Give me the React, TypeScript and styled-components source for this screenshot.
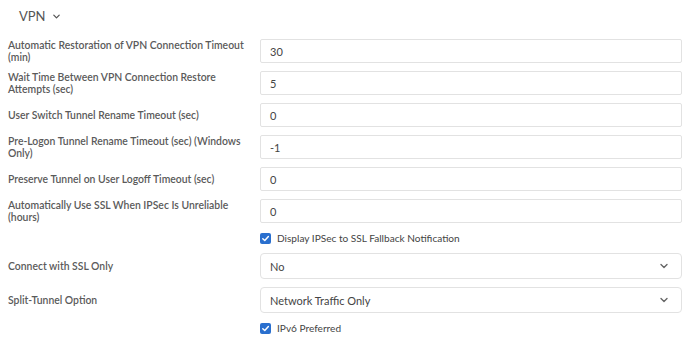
import React from "react";
import styled, { createGlobalStyle } from "styled-components";

const Global = createGlobalStyle`
  html, body { margin: 0; padding: 0; background: #fff; }
  body { font-family: Lato, "Open Sans", "Liberation Sans", sans-serif; }
`;

const Page = styled.div`
  width: 700px;
  height: 338px;
  box-sizing: border-box;
  padding: 8px 18px 0 8px;
  background: #fff;
  overflow: hidden;
`;

const Header = styled.div`
  display: flex;
  align-items: center;
  gap: 6px;
  height: 16px;
  padding-left: 11px;
  font-size: 13px;
  color: #555;
  margin-bottom: 15px;
`;

const Form = styled.div`
  display: flex;
  flex-direction: column;
  gap: 8px;
`;

const Row = styled.div`
  display: grid;
  grid-template-columns: 252px 1fr;
  align-items: center;
`;

const Label = styled.div`
  font-family: "Lato Semibold", Lato, "Open Sans", sans-serif;
  font-size: 10.4px;
  line-height: 12px;
  font-weight: 600;
  color: #5a5a5a;
  padding-right: 4px;
`;

const Input = styled.div`
  height: 24px;
  box-sizing: border-box;
  border: 1px solid #e2e2e2;
  border-radius: 2px;
  padding: 0 9px;
  display: flex;
  align-items: center;
  font-size: 11px;
  color: #444;
`;

const Select = styled(Input)`
  height: 26px;
  border-radius: 4px;
  justify-content: space-between;
  padding-right: 12px;
`;

const CheckRow = styled.label`
  display: flex;
  align-items: center;
  gap: 6px;
  height: 14px;
  font-size: 10.1px;
  color: #444;
`;

const Box = styled.span`
  width: 11px;
  height: 11px;
  border-radius: 2px;
  background: #2a6fce;
  display: flex;
  align-items: center;
  justify-content: center;
`;

const Chevron = ({ size = 9, color = "#555" }: { size?: number; color?: string }) => (
  <svg width={size} height={size} viewBox="0 0 10 10">
    <path d="M2 3.5 L5 6.5 L8 3.5" fill="none" stroke={color} strokeWidth="1.4" strokeLinecap="round" strokeLinejoin="round" />
  </svg>
);

const Check = () => (
  <Box>
    <svg width="9" height="9" viewBox="0 0 10 10">
      <path d="M2 5.2 L4.2 7.3 L8.2 2.8" fill="none" stroke="#fff" strokeWidth="1.6" strokeLinecap="round" strokeLinejoin="round" />
    </svg>
  </Box>
);

const fields: [string, string][] = [
  ["Automatic Restoration of VPN Connection Timeout (min)", "30"],
  ["Wait Time Between VPN Connection Restore Attempts (sec)", "5"],
  ["User Switch Tunnel Rename Timeout (sec)", "0"],
  ["Pre-Logon Tunnel Rename Timeout (sec) (Windows Only)", "-1"],
  ["Preserve Tunnel on User Logoff Timeout (sec)", "0"],
  ["Automatically Use SSL When IPSec Is Unreliable (hours)", "0"],
];

export default function App() {
  return (
    <Page>
      <Global />
      <Header>
        VPN <Chevron size={9} color="#555" />
      </Header>
      <Form>
        {fields.map(([l, v]) => (
          <Row key={l}>
            <Label>{l}</Label>
            <Input>{v}</Input>
          </Row>
        ))}
        <Row>
          <span />
          <CheckRow>
            <Check /> Display IPSec to SSL Fallback Notification
          </CheckRow>
        </Row>
        <Row>
          <Label>Connect with SSL Only</Label>
          <Select>
            No <Chevron size={10} color="#666" />
          </Select>
        </Row>
        <Row>
          <Label>Split-Tunnel Option</Label>
          <Select>
            Network Traffic Only <Chevron size={10} color="#666" />
          </Select>
        </Row>
        <Row>
          <span />
          <CheckRow>
            <Check /> IPv6 Preferred
          </CheckRow>
        </Row>
      </Form>
    </Page>
  );
}
